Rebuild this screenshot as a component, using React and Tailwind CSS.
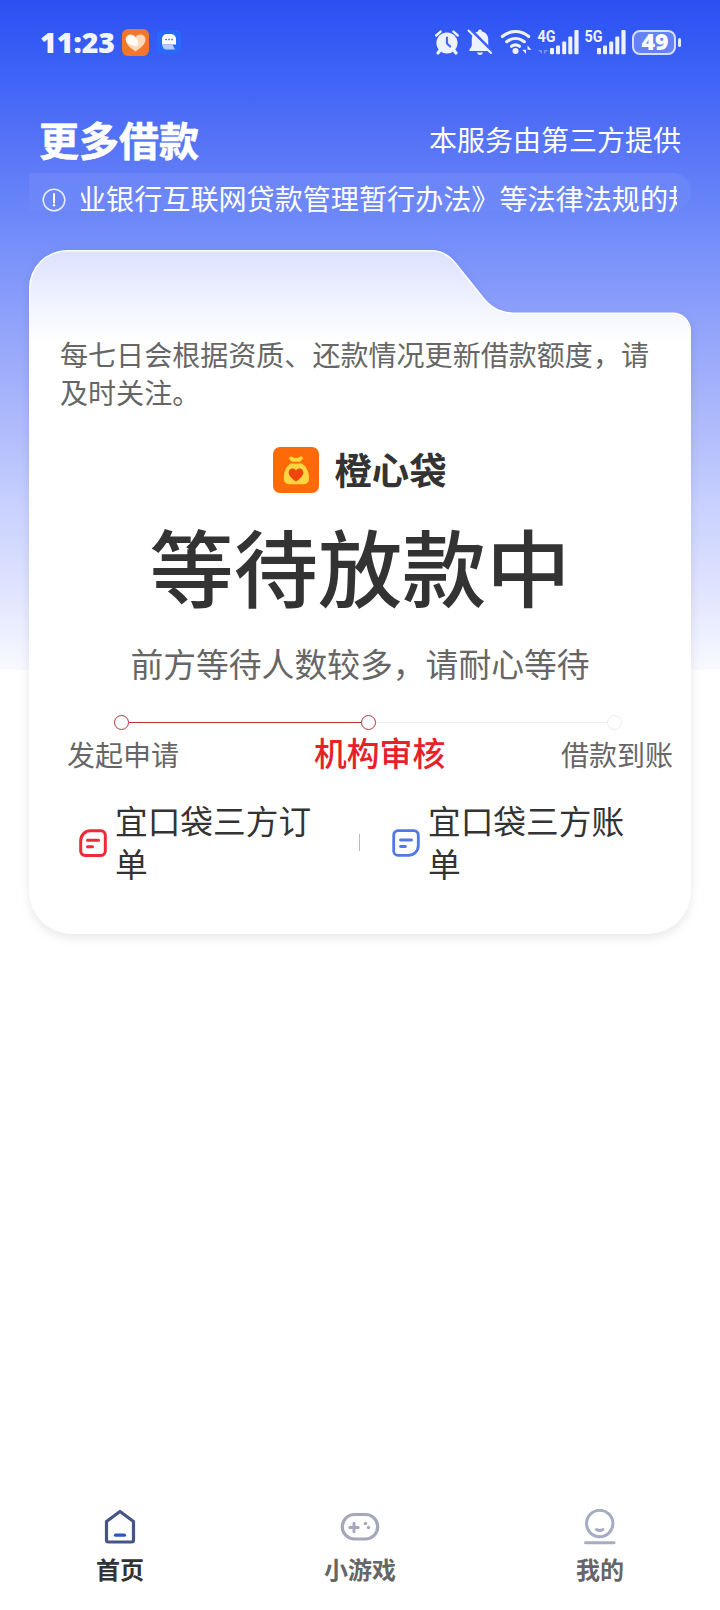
import React from "react";

const NAV_ITEMS = [
  { label: "首页", icon: HomeIcon, active: true },
  { label: "小游戏", icon: GameIcon },
  { label: "我的", icon: ProfileIcon },
];

function AlarmIcon() {
  return (
    <svg width="26" height="26" viewBox="0 0 26 26" className="text-[#eef2ff]">
      <path d="M2.200 6.500 6.600 2.600M23.800 6.500l-4.400-3.900" stroke="currentColor" strokeWidth="2.400" strokeLinecap="round" />
      <circle cx="13" cy="14" r="10.600" fill="currentColor" />
      <path d="m5.500 22-1.500 2M20.500 22l1.500 2" stroke="currentColor" strokeWidth="3.200" strokeLinecap="round" />
      <path d="M13 8.500v6l3.200 3" fill="none" stroke="#4468f3" strokeWidth="2.200" strokeLinecap="round" />
    </svg>
  );
}

function MutedBellIcon() {
  return (
    <svg width="26" height="28" viewBox="0 0 26 28" className="text-[#eef2ff]">
      <path
        d="M13 1.500c1.200 0 2 .8 2 2 3.800.9 6.200 3.800 6.200 7.500v5.500c0 2 .9 3.200 2.300 4.800v1.700h-21v-1.700c1.400-1.600 2.300-2.800 2.300-4.800V11c0-3.700 2.400-6.600 6.200-7.500 0-1.200.8-2 2-2Z"
        fill="currentColor"
      />
      <path d="M10 24.500h6c-.4 1.500-1.500 2.400-3 2.400s-2.600-.9-3-2.400Z" fill="currentColor" />
      <path d="M3.500 1.500 26 24" stroke="#3c60f5" strokeWidth="3" />
      <path d="M1.500 2.500 24 25" stroke="currentColor" strokeWidth="2" strokeLinecap="round" />
    </svg>
  );
}

function WifiIcon() {
  return (
    <svg width="32" height="26" viewBox="0 0 32 26" className="text-[#eef2ff]">
      <g fill="none" stroke="currentColor" strokeWidth="3.100" strokeLinecap="round">
        <path d="M2.300 7.500c8-6.700 18.400-6.700 26.400 0" />
        <path d="M6.700 12.700c5.400-4.300 12.200-4.300 17.600 0" />
        <path d="M11.500 17.300c2.600-1.900 5.400-1.900 8 0" />
      </g>
      <circle cx="15.500" cy="22" r="3" fill="currentColor" />
      <path d="M26 16.500v8.500l-3.700-4.200H26ZM27.500 25v-8.500l4 4.200h-4Z" fill="currentColor" />
    </svg>
  );
}

function SignalIcon({ network, faded }) {
  return (
    <svg width="42" height="26" viewBox="0 0 42 26" className="overflow-visible text-[#eef2ff]">
      <text
        x="-0.500"
        y="12.500"
        textLength="18"
        lengthAdjust="spacingAndGlyphs"
        fill="currentColor"
        className="font-['Roboto'] text-[16.500px] font-bold"
      >
        {network}
      </text>
      {faded && (
        <path d="M4 17v8l-4-4h4ZM6 17v8l4-4H6Z" fill="currentColor" opacity="0.350" />
      )}
      <g fill="currentColor">
        <rect x="12" y="19" width="4" height="6.200" rx="1" />
        <rect x="18" y="16.500" width="4" height="8.700" rx="1" />
        <rect x="24.200" y="12.500" width="4" height="12.700" rx="1" />
        <rect x="30.300" y="7.500" width="4" height="17.700" rx="1" />
        <rect x="36.400" y="1" width="4.200" height="24.200" rx="1" />
      </g>
    </svg>
  );
}

function Battery({ level }) {
  return (
    <div className="flex items-center gap-[2px]">
      <div className="flex h-[25px] w-[44px] items-center justify-center rounded-[8px] border-2 border-[#d5deff] bg-[#6683f6] pb-px pl-[2px] font-['Open_Sans'] text-[23px] leading-none font-extrabold text-white">
        {level}
      </div>
      <div className="h-[9px] w-[3px] rounded-full bg-[#e6ecff]" />
    </div>
  );
}

function StatusBar() {
  return (
    <div className="flex h-[84px] items-center pr-[39px] pl-[40px]">
      <span className="w-[74px] font-['Open_Sans'] text-[28.500px] leading-none font-extrabold whitespace-nowrap text-[#f1f5ff]">
        11:23
      </span>
      <svg width="27" height="27" viewBox="0 0 27 27" className="ml-[8px]">
        <rect width="27" height="27" rx="6" fill="#f4762c" />
        <path d="M13.500 22.500C8 18.800 3.800 15 3.800 10.500c0-5.200 6.800-7 9.700-2.500 2.900-4.500 10-2.700 10 2.500 0 4.500-4.500 8.300-10 12Z" fill="#ffd9b8" />
        <path d="M13.500 8.500c3 3 4 6 1 9-4-1-10.700-3-10.700-7 0-4.500 6.200-6.500 9.700-2Z" fill="#fff" opacity="0.850" />
      </svg>
      <svg width="24" height="24" viewBox="0 0 24 24" className="ml-[8px]">
        <rect width="24" height="24" rx="5" fill="#2a68fb" />
        <path d="M10 4h3.500c3.300 0 5.500 2.200 5.500 5v5.500H5V9.500C5 6.200 7 4 10 4Z" fill="#fff" />
        <path d="M5 14.500h10.500l2.500 5H9.500c-2.500 0-4-2-4.500-5Z" fill="#b6cbff" />
        <path d="M8.300 9.500h1.500M11.300 9.500h1.500M14.300 9.500h1.500" stroke="#2a68fb" strokeWidth="1.400" />
      </svg>
      <div className="ml-auto flex items-center">
        <AlarmIcon />
        <div className="ml-[7px]"><MutedBellIcon /></div>
        <div className="ml-[7px]"><WifiIcon /></div>
        <div className="ml-[6px]"><SignalIcon network="4G" faded /></div>
        <div className="ml-[5px]"><SignalIcon network="5G" /></div>
        <div className="ml-[5px]"><Battery level="49" /></div>
      </div>
    </div>
  );
}

function Notice() {
  return (
    <div className="mx-[29px] flex h-[38px] items-center rounded-r-[18px] bg-gradient-to-b from-white/7 to-white/2 pr-[14px]">
      <svg width="24" height="24" viewBox="0 0 24 24" className="mt-[15px] ml-[13px] shrink-0">
        <circle cx="12" cy="12" r="10.800" fill="none" stroke="#e6ebff" strokeWidth="1.500" />
        <path d="M12 6v8.500" stroke="#fff" strokeWidth="2" strokeLinecap="round" />
        <circle cx="12" cy="17.300" r="1.200" fill="#fff" />
      </svg>
      <div className="mt-[12px] ml-[15px] min-w-0 flex-1 overflow-x-clip">
        <p className="-ml-[3px] text-[28.100px] leading-[42px] whitespace-nowrap text-white">
          业银行互联网贷款管理暂行办法》等法律法规的规
        </p>
      </div>
    </div>
  );
}

function BagLogo() {
  return (
    <svg width="46" height="46" viewBox="0 0 46 46">
      <rect width="46" height="46" rx="7" fill="#ff6a08" />
      <path d="M16 10.500c2-2.300 4-.3 5 .2 1.300.5 2.700.5 4 0 1.500-.8 3.500-2.200 5-.2.700 1.500-2 3.200-3 4.200h-8c-1-1-3.700-2.700-3-4.200Z" fill="#ffd541" />
      <path d="M17.500 16.500h11.500c5 3.500 7 9.500 7 14.500 0 4.500-2.300 6.300-6.300 6.300H17c-4 0-6.200-1.800-6.200-6.300 0-5 1.700-11 6.700-14.500Z" fill="#ffd541" />
      <path d="M23 34.500c-4-2.800-7.300-5.600-7.300-9 0-4 5-5.400 7.300-2 2.300-3.400 7.300-2 7.300 2 0 3.400-3.300 6.200-7.300 9Z" fill="#f1440e" />
    </svg>
  );
}

function Progress() {
  return (
    <div>
      <div className="flex items-center pr-[69px] pl-[85px]">
        <i className="size-[15px] rounded-full border border-[#b8323b]" />
        <i className="h-px flex-1 bg-[#b8323b]" />
        <i className="size-[15px] rounded-full border border-[#b8323b]" />
        <i className="h-px flex-1 bg-[#ececec]" />
        <i className="size-[15px] rounded-full border border-[#ececec]" />
      </div>
      <div className="flex items-baseline pr-[18px] pl-[38px] text-[28px] leading-[44px] text-[#666]">
        <span>发起申请</span>
        <span className="ml-[135px] text-[32.800px] font-medium text-[#e6212a]">机构审核</span>
        <span className="ml-auto">借款到账</span>
      </div>
    </div>
  );
}

function OrderIcon() {
  return (
    <svg width="28" height="28" viewBox="0 0 28 28" fill="none" stroke="#ee2a36" strokeLinecap="round" strokeLinejoin="round">
      <path d="M11.500 1.800H22a4.300 4.300 0 0 1 4.300 4.300v16a4.300 4.300 0 0 1-4.300 4.300H6A4.300 4.300 0 0 1 1.700 22V11.500a9.800 9.800 0 0 1 9.800-9.700Z" strokeWidth="3" />
      <path d="M8.500 11.200h11M8.500 17.700h5" strokeWidth="3" />
    </svg>
  );
}

function BillIcon() {
  return (
    <svg width="28" height="28" viewBox="0 0 28 28" fill="none" stroke="#5078e6" strokeLinecap="round" strokeLinejoin="round">
      <path d="M6 1.700h16A4.300 4.300 0 0 1 26.300 6v10.500a9.800 9.800 0 0 1-9.800 9.800H6A4.300 4.300 0 0 1 1.700 22V6A4.300 4.300 0 0 1 6 1.700Z" strokeWidth="2.800" />
      <path d="M8.500 11h11M8.500 17.500h5" strokeWidth="2.800" />
    </svg>
  );
}

function LoanCard() {
  return (
    <section className="relative mx-[29px] mt-[39px] h-[684px]">
      {/* Folder-shaped sheet behind the content */}
      <div className="absolute inset-0 drop-shadow-[0_4px_5px_rgba(0,0,0,0.09)]">
        <div className="h-full bg-white [clip-path:path('M0_38A38_38_0_0_1_38_0H402C416_0_423_7_432_19L456_49C464_58_473_62.500_487_62.500H644A18_18_0_0_1_662_80.500V641A43_43_0_0_1_619_684H43A43_43_0_0_1_0_641Z')]">
          <div className="h-[92px] bg-gradient-to-b from-[#dce1ff] to-white [clip-path:path('M1.500_38A36.500_36.500_0_0_1_38_1.500H402C415_1.500_422_8_431_20L455_50C463_59_473_64_487_64H644A16.500_16.500_0_0_1_660.500_80.500V92H1.500Z')]" />
        </div>
      </div>

      <div className="relative pt-[85px]">
        <p className="pr-[30px] pl-[31px] text-[28.050px] leading-[37.500px] text-[#666]">
          每七日会根据资质、还款情况更新借款额度，请及时关注。
        </p>

        <div className="mt-[35px] flex items-center justify-center gap-[15px]">
          <BagLogo />
          <span className="-mt-[2px] text-[37.400px] leading-[52px] font-bold text-[#333]">橙心袋</span>
        </div>

        <h2 className="mt-[13px] text-center text-[84.200px] leading-[112px] font-medium text-[#333]">
          等待放款中
        </h2>
        <p className="mt-[20px] text-center text-[32.800px] leading-[46px] text-[#666]">
          前方等待人数较多，请耐心等待
        </p>

        <div className="mt-[29px]">
          <Progress />
        </div>

        <div className="mt-[25px] flex items-center text-[32.700px] leading-[42.500px] text-[#333]">
          <div className="flex w-[330px] items-center pl-[50px]">
            <OrderIcon />
            <span className="-mt-[2px] ml-[8px] w-[204px]">宜口袋三方订单</span>
          </div>
          <div className="h-[17px] w-px bg-[#bbb]" />
          <div className="flex flex-1 items-center pl-[32px]">
            <BillIcon />
            <span className="-mt-[2px] ml-[8px] w-[204px]">宜口袋三方账单</span>
          </div>
        </div>
      </div>
    </section>
  );
}

function HomeIcon() {
  return (
    <svg width="40" height="36" viewBox="0 0 40 36" fill="none" strokeLinecap="round" strokeLinejoin="round">
      <path d="M20 2.500 33.500 12.500V31a2 2 0 0 1-2 2h-23a2 2 0 0 1-2-2V12.500Z" stroke="#465585" strokeWidth="3.200" />
      <path d="M15.500 26.200h9" stroke="#2b55c8" strokeWidth="3.200" />
    </svg>
  );
}

function GameIcon() {
  return (
    <svg width="40" height="36" viewBox="0 0 40 36" fill="none" stroke="#a5a8bd" strokeLinecap="round">
      <rect x="2.300" y="5.500" width="35.400" height="24.500" rx="12.200" strokeWidth="3.200" />
      <path d="M9.800 18.500h8.400M14 14.300v8.400" strokeWidth="3" />
      <circle cx="25.500" cy="14.500" r="1.700" fill="#a5a8bd" stroke="none" />
      <circle cx="28.500" cy="18.500" r="1.700" fill="#a5a8bd" stroke="none" />
    </svg>
  );
}

function ProfileIcon() {
  return (
    <svg width="40" height="36" viewBox="0 0 40 36" fill="none" stroke="#a5adc0" strokeLinecap="round">
      <circle cx="19.700" cy="14.500" r="13.200" strokeWidth="3" />
      <path d="M16.500 20.500c2 1.300 4.400 1.300 6.400 0" strokeWidth="3" />
      <path d="M5.500 33.800h28.500" strokeWidth="3" />
    </svg>
  );
}

function BottomNav() {
  return (
    <nav className="mt-auto grid h-[101px] grid-cols-3">
      {NAV_ITEMS.map(({ label, icon: Icon, active }) => (
        <button
          key={label}
          className={`flex flex-col items-center text-[24px] leading-[36px] font-bold ${
            active ? "text-[#333]" : "text-[#666]"
          }`}
        >
          <Icon />
          <span className="mt-[6px]">{label}</span>
        </button>
      ))}
    </nav>
  );
}

export default function App() {
  return (
    <div className="flex h-[1610px] w-[720px] flex-col overflow-hidden bg-white bg-[linear-gradient(180deg,#2a50f2_0px,#3e63f7_75px,#5270f6_130px,#718bfa_230px,#8c9ffa_310px,#b0bcfb_430px,#c6cfff_500px,#e0e4ff_590px,#f8f9ff_669px)] bg-[length:720px_670px] bg-no-repeat font-['Noto_Sans_CJK_SC',sans-serif]">
      <StatusBar />
      <header className="flex h-[89px] items-center justify-between pt-[21px] pr-[39px] pl-[39px] text-white">
        <h1 className="text-[40px] leading-[56px] font-bold [-webkit-text-stroke:0.600px_white]">更多借款</h1>
        <span className="text-[28px] leading-[40px]">本服务由第三方提供</span>
      </header>
      <Notice />
      <LoanCard />
      <BottomNav />
    </div>
  );
}
